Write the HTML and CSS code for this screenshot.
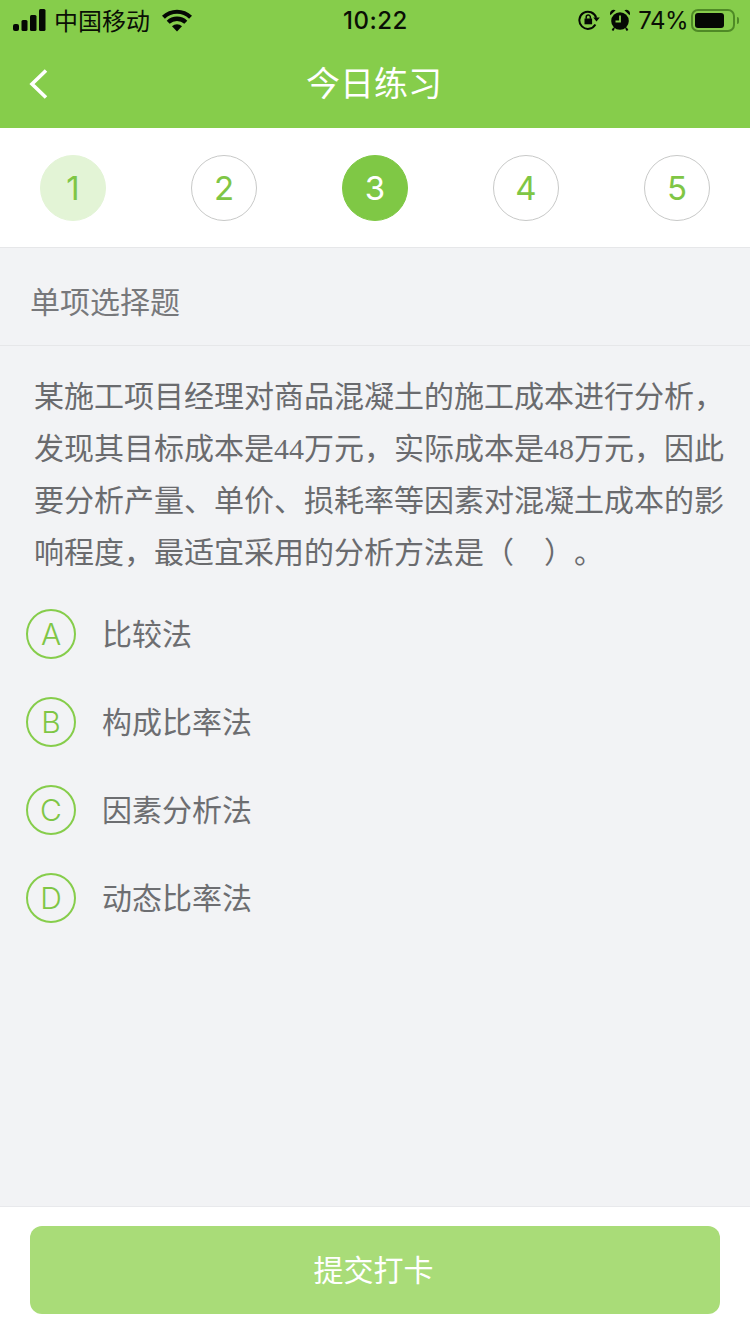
FILE: index.html
```html
<!DOCTYPE html>
<html lang="zh-CN">
<head>
<meta charset="utf-8">
<title>今日练习</title>
<link rel="stylesheet" href="styles.css">
</head>
<body>
<div class="page">
  <header class="top">
    <div class="status">
      <div class="status-left">
        <svg class="signal" width="34" height="22" viewBox="0 0 34 22"><rect x="1" y="15" width="6" height="7" rx="2"/><rect x="9.500" y="11" width="6" height="11" rx="1.500"/><rect x="18" y="6" width="6.500" height="16" rx="1.500"/><rect x="27" y="0" width="6.500" height="22" rx="1.500"/></svg>
        <span class="carrier">中国移动</span>
        <svg class="wifi" width="30" height="23" viewBox="0 0 30 23"><path d="M15 22.500l-5-5.300a7.200 7.200 0 0 1 10 0z"/><path d="M7.700 14.800l-3-3.100a14.800 14.800 0 0 1 20.600 0l-3 3.100a10.600 10.600 0 0 0-14.600 0z"/><path d="M2.900 9.700L0 6.700a21.600 21.600 0 0 1 30 0l-2.900 3a17.400 17.400 0 0 0-24.200 0z"/></svg>
      </div>
      <div class="clock">10:22</div>
      <div class="status-right">
        <svg class="lock" width="22" height="20" viewBox="0 0 22 20"><path class="lock-ring" d="M17.400 14.600A8.600 8.600 0 1 1 18.200 7.800"/><path d="M15.200 7.600h6.600l-3.300 3.900z"/><path d="M6.500 8.500h7.600v5.800H6.500z"/><path class="lock-ring thin" d="M8.200 8.800V7.200a2.100 2.100 0 0 1 4.200 0v1.600"/></svg>
        <svg class="alarm" width="20" height="22" viewBox="0 0 20 22"><circle cx="10" cy="12" r="8.800"/><path d="M0.400 6.200a3.800 3.800 0 0 1 5.200-5zM19.600 6.200a3.800 3.800 0 0 0-5.200-5z"/><path class="hand" d="M10 6.500v6H5.500"/><path class="feet" d="M4 19l-1.500 2.500M16 19l1.500 2.500"/></svg>
        <span class="pct">74%</span>
        <div class="battery"><div class="battery-fill"></div></div>
        <div class="battery-cap"></div>
      </div>
    </div>
    <nav class="nav">
      <svg class="back" width="20" height="32" viewBox="0 0 20 32"><path d="M17 2.500L3 16l14 13.500"/></svg>
      <h1 class="title">今日练习</h1>
    </nav>
  </header>

  <section class="steps">
    <div class="step step-done">1</div>
    <div class="step">2</div>
    <div class="step step-current">3</div>
    <div class="step">4</div>
    <div class="step">5</div>
  </section>

  <main class="content">
    <div class="kind"><span class="kind-text">单项选择题</span></div>
    <p class="question">某施工项目经理对商品混凝土的施工成本进行分析，发现其目标成本是<span class="num">44</span>万元，实际成本是<span class="num">48</span>万元，因此要分析产量、单价、损耗率等因素对混凝土成本的影响程度，最适宜采用的分析方法是（　）。</p>
    <ul class="options">
      <li class="option"><span class="letter">A</span><span class="option-text">比较法</span></li>
      <li class="option"><span class="letter">B</span><span class="option-text">构成比率法</span></li>
      <li class="option"><span class="letter">C</span><span class="option-text">因素分析法</span></li>
      <li class="option"><span class="letter">D</span><span class="option-text">动态比率法</span></li>
    </ul>
  </main>

  <footer class="footer">
    <button class="submit">提交打卡</button>
  </footer>
</div>
</body>
</html>
```
FILE: styles.css
```css
* { box-sizing: border-box; }
html, body { margin: 0; padding: 0; }
body {
  width: 750px;
  height: 1334px;
  overflow: hidden;
  font-family: "Inter", "Noto Sans CJK SC", sans-serif;
  background: #f2f3f5;
}
.page { display: flex; flex-direction: column; height: 1334px; }

.top { background: #86cd4b; height: 128px; flex: none; }
.status {
  height: 40px;
  display: grid;
  grid-template-columns: 1fr auto 1fr;
  align-items: center;
  padding: 0 11px 0 12px;
  color: #0a0f05;
}
.status-left { display: flex; align-items: center; }
.signal, .wifi { fill: #050804; }
.carrier { font-size: 24px; margin-left: 8px; font-family: "Noto Sans CJK SC", sans-serif; font-weight: 400; line-height: 40px; margin-top: -1px; }
.wifi { margin-left: 12px; margin-top: 1px; }
.clock { font-size: 24px; font-weight: 500; letter-spacing: 0.5px; }
.status-right { display: flex; align-items: center; justify-content: flex-end; }
.lock { fill: #050804; }
.lock-ring { fill: none; stroke: #050804; stroke-width: 2; }
.lock-ring.thin { stroke-width: 1.500; }
.alarm { fill: #050804; margin-left: 10px; }
.alarm .hand { fill: none; stroke: #86cd4b; stroke-width: 1.800; }
.alarm .feet { fill: none; stroke: #050804; stroke-width: 2; }
.pct { font-size: 24px; margin-left: 8px; font-weight: 400; letter-spacing: -0.5px; font-family: "Inter", sans-serif; }
.battery {
  width: 44px; height: 23px;
  margin-left: 3px;
  border: 2px solid #4f8a26;
  border-radius: 7px;
  padding: 2px;
}
.battery-fill { width: 29px; height: 15px; background: #050804; border-radius: 3px; }
.battery-cap { width: 2px; height: 7px; background: #4f8a26; margin-left: 2px; border-radius: 0 2px 2px 0; }

.nav { height: 88px; position: relative; display: flex; align-items: center; justify-content: center; }
.back { position: absolute; left: 29px; top: 28px; fill: none; stroke: #fff; stroke-width: 3.600; }
.title { margin: 0 2px 4px 0; font-size: 34px; font-weight: 400; color: #fff; line-height: 84px; font-family: "Noto Sans CJK SC", sans-serif; }

.steps {
  height: 120px;
  flex: none;
  background: #fff;
  border-bottom: 1px solid #e6e7e9;
  display: flex;
  justify-content: space-between;
  align-items: flex-start;
  padding: 27px 40px 0;
}
.step {
  width: 66px; height: 66px;
  border-radius: 50%;
  border: 1px solid #c8c9c8;
  color: #7fc645;
  font-size: 33px;
  font-weight: 400;
  display: flex; align-items: center; justify-content: center;
  font-family: "Inter", sans-serif;
}
.step-done { background: #e3f4d6; border-color: #e3f4d6; }
.step-current { background: #7fc845; border-color: #7fc845; color: #fff; }

.content { flex: 1; min-height: 0; }
.kind {
  height: 98px;
  padding: 0 30px;
  display: flex; align-items: center;
  font-size: 30px;
  font-weight: 400;
  color: #77787b;
  border-bottom: 1px solid #e6e7e9;
  font-family: "Noto Sans CJK SC", sans-serif;
}
.kind-text { margin-top: 7px; }
.question {
  margin: 0;
  padding: 22px 20px 0 34px;
  font-size: 30px;
  line-height: 52px;
  font-weight: 400;
  color: #6a6b6e;
  text-spacing-trim: space-all;
  font-family: "Noto Sans CJK SC", sans-serif;
}
.num { font-family: "Liberation Serif", serif; font-size: 30px; line-height: 0; }
.options { list-style: none; margin: 14px 0 0; padding: 0 0 0 26px; }
.option {
  height: 88px;
  display: flex; align-items: center;
  font-size: 30px;
  font-weight: 400;
  color: #6d6e71;
  font-family: "Noto Sans CJK SC", sans-serif;
}
.option-text { margin-bottom: 4px; }
.letter {
  width: 50px; height: 50px;
  margin-right: 26px;
  border-radius: 50%;
  border: 2px solid #86cd4b;
  color: #7fc645;
  font-family: "Inter", sans-serif;
  font-size: 30px;
  font-weight: 300;
  display: flex; align-items: center; justify-content: center;
}

.footer {
  height: 128px;
  flex: none;
  background: #fff;
  border-top: 1px solid #e8e9ec;
  padding: 19px 30px 0;
}
.submit {
  display: block;
  width: 100%;
  height: 88px;
  border: 0;
  border-radius: 12px;
  background: #a9dc78;
  color: #fff;
  font-size: 30px;
  font-weight: 400;
  padding: 0 3px 4px 0;
  font-family: "Noto Sans CJK SC", sans-serif;
}
```
